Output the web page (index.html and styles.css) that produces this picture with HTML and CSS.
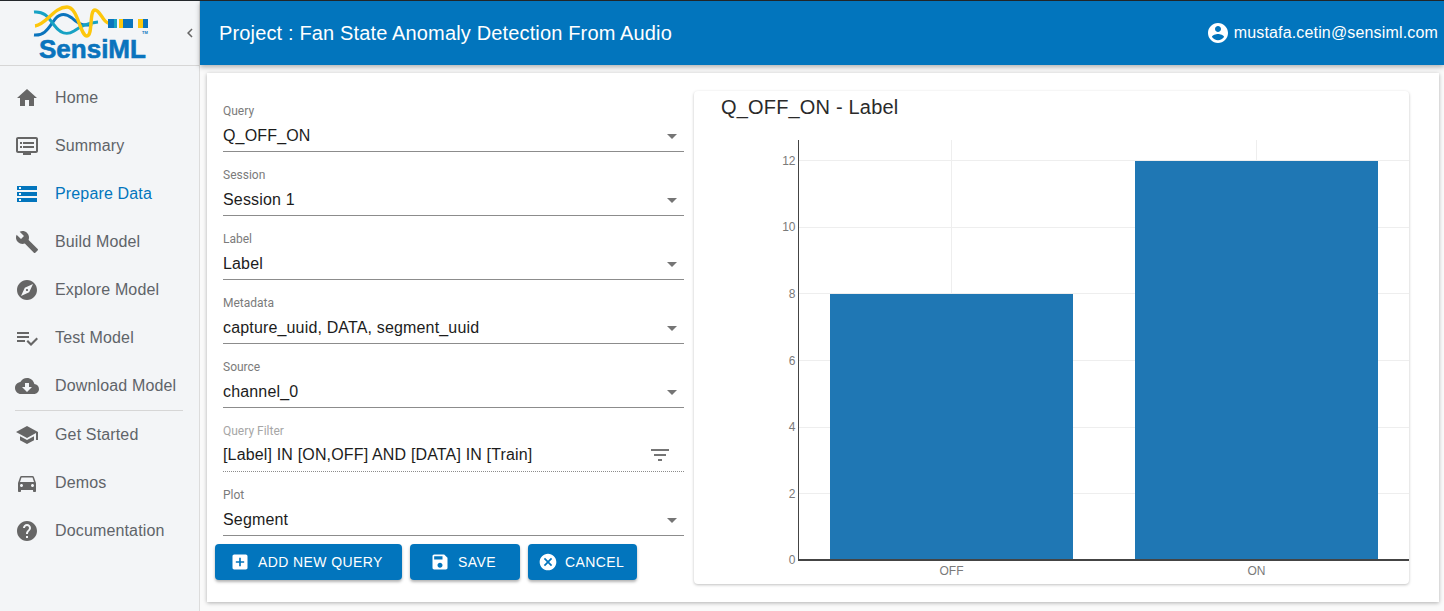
FILE: index.html
```html
<!DOCTYPE html>
<html lang="en">
<head>
  <meta charset="UTF-8">
  <title>SensiML</title>
  <link rel="stylesheet" href="styles.css">
</head>
<body>
  <div class="app">
    <aside class="sidebar">
      <div class="brand">
        <svg class="logo" width="124" height="60" viewBox="30 2 124 60">
          <path class="wave blue" d="M34 33C44 34 48 27 53 20C58 12 64 10 72 16C78 22 84 25 92 22"/>
          <path class="wave teal" d="M34 10C44 9 48 15 54 23C60 31 66 34 74 29C80 25 86 21 98 20"/>
          <path class="wave yellow" d="M35 24C46 23 54 5 67 5C78 5 80 34 87 34C93 34 89 8 95 8C100 8 103 20 108 21"/>
          <rect x="108" y="17" width="6" height="9" fill="#0a74bd"/>
          <rect x="114" y="17" width="3" height="9" fill="#17a2c4"/>
          <rect x="119" y="17" width="4" height="9" fill="#fdc70c"/>
          <rect x="123" y="17" width="10" height="9" fill="#0a74bd"/>
          <rect x="138" y="17" width="5" height="9" fill="#fdc70c"/>
          <rect x="143" y="17" width="5" height="9" fill="#0a74bd"/>
          <text class="logo-name" x="39" y="56">SensiML</text>
          <text class="logo-tm" x="142" y="31.5">TM</text>
        </svg>
        <svg class="collapse" width="18" height="18" viewBox="0 0 24 24"><path d="M15.41 7.41L14 6l-6 6 6 6 1.41-1.41L10.83 12z"/></svg>
      </div>
      <nav class="nav">
        <a class="nav-item"><svg viewBox="0 0 24 24"><path d="M10 20v-6h4v6h5v-8h3L12 3 2 12h3v8z"/></svg>Home</a>
        <a class="nav-item"><svg viewBox="0 0 24 24"><path d="M21 3H3c-1.1 0-2 .9-2 2v12c0 1.1.9 2 2 2h5v2h8v-2h5c1.1 0 1.99-.9 1.99-2L23 5c0-1.1-.9-2-2-2zm0 14H3V5h18v12zm-2-9H8v2h11V8zm0 4H8v2h11v-2zM7 8H5v2h2V8zm0 4H5v2h2v-2z"/></svg>Summary</a>
        <a class="nav-item active"><svg viewBox="0 0 24 24"><path d="M2 20h20v-4H2v4zm2-3h2v2H4v-2zM2 4v4h20V4H2zm4 3H4V5h2v2zm-4 7h20v-4H2v4zm2-3h2v2H4v-2z"/></svg>Prepare Data</a>
        <a class="nav-item"><svg viewBox="0 0 24 24"><path d="M22.7 19l-9.1-9.1c.9-2.3.4-5-1.5-6.9-2-2-5-2.4-7.4-1.3L9 6 6 9 1.6 4.7C.4 7.1.9 10.1 2.9 12.1c1.9 1.9 4.6 2.4 6.9 1.5l9.1 9.1c.4.4 1 .4 1.4 0l2.3-2.3c.5-.4.5-1.1.1-1.4z"/></svg>Build Model</a>
        <a class="nav-item"><svg viewBox="0 0 24 24"><path d="M12 10.9c-.61 0-1.1.49-1.1 1.1s.49 1.1 1.1 1.1c.61 0 1.1-.49 1.1-1.1s-.49-1.1-1.1-1.1zM12 2C6.48 2 2 6.48 2 12s4.48 10 10 10 10-4.48 10-10S17.52 2 12 2zm2.19 12.19L6 18l3.81-8.19L18 6l-3.81 8.19z"/></svg>Explore Model</a>
        <a class="nav-item"><svg viewBox="0 0 24 24"><path d="M14 10H2v2h12v-2zm0-4H2v2h12V6zM2 16h8v-2H2v2zm19.5-4.5L23 13l-6.99 7-4.51-4.5L13 14l3.01 3 5.49-5.5z"/></svg>Test Model</a>
        <a class="nav-item"><svg viewBox="0 0 24 24"><path d="M19.35 10.04C18.67 6.59 15.64 4 12 4 9.11 4 6.6 5.64 5.35 8.04 2.34 8.36 0 10.91 0 14c0 3.31 2.69 6 6 6h13c2.76 0 5-2.24 5-5 0-2.64-2.05-4.78-4.65-4.96zM17 13l-5 5-5-5h3V9h4v4h3z"/></svg>Download Model</a>
        <hr class="nav-rule">
        <a class="nav-item"><svg viewBox="0 0 24 24"><path d="M5 13.18v4L12 21l7-3.82v-4L12 17l-7-3.82zM12 3L1 9l11 6 9-4.91V17h2V9L12 3z"/></svg>Get Started</a>
        <a class="nav-item"><svg viewBox="0 0 24 24"><path d="M18.92 6.01C18.72 5.42 18.16 5 17.5 5h-11c-.66 0-1.21.42-1.42 1.01L3 12v8c0 .55.45 1 1 1h1c.55 0 1-.45 1-1v-1h12v1c0 .55.45 1 1 1h1c.55 0 1-.45 1-1v-8l-2.08-5.99zM6.5 16c-.83 0-1.5-.67-1.5-1.5S5.67 13 6.5 13s1.5.67 1.5 1.5S7.33 16 6.5 16zm11 0c-.83 0-1.5-.67-1.5-1.5s.67-1.5 1.5-1.5 1.5.67 1.5 1.5-.67 1.5-1.5 1.5zM5 11l1.5-4.5h11L19 11H5z"/></svg>Demos</a>
        <a class="nav-item"><svg viewBox="0 0 24 24"><path d="M12 2C6.48 2 2 6.48 2 12s4.48 10 10 10 10-4.48 10-10S17.52 2 12 2zm1 17h-2v-2h2v2zm2.07-7.75l-.9.92C13.45 12.9 13 13.5 13 15h-2v-.5c0-1.1.45-2.1 1.17-2.83l1.24-1.26c.37-.36.59-.86.59-1.41 0-1.1-.9-2-2-2s-2 .9-2 2H8c0-2.21 1.79-4 4-4s4 1.79 4 4c0 .88-.36 1.68-.93 2.25z"/></svg>Documentation</a>
      </nav>
    </aside>

    <div class="content">
      <header class="topbar">
        <div class="project">Project : Fan State Anomaly Detection From Audio</div>
        <div class="user">
          <svg viewBox="0 0 24 24"><path d="M12 2C6.48 2 2 6.48 2 12s4.48 10 10 10 10-4.48 10-10S17.52 2 12 2zm0 3c1.66 0 3 1.34 3 3s-1.34 3-3 3-3-1.34-3-3 1.34-3 3-3zm0 14.2c-2.5 0-4.71-1.28-6-3.22.03-1.99 4-3.08 6-3.08 1.99 0 5.97 1.09 6 3.08-1.29 1.94-3.5 3.22-6 3.22z"/></svg>
          mustafa.cetin@sensiml.com
        </div>
      </header>

      <main class="page">
        <section class="panel">
          <form class="query-form">
            <div class="fields">
              <div class="field">
                <label>Query</label>
                <div class="value">Q_OFF_ON<svg class="caret" viewBox="0 0 24 24"><path d="M7 10l5 5 5-5z"/></svg></div>
              </div>
              <div class="field">
                <label>Session</label>
                <div class="value">Session 1<svg class="caret" viewBox="0 0 24 24"><path d="M7 10l5 5 5-5z"/></svg></div>
              </div>
              <div class="field">
                <label>Label</label>
                <div class="value">Label<svg class="caret" viewBox="0 0 24 24"><path d="M7 10l5 5 5-5z"/></svg></div>
              </div>
              <div class="field">
                <label>Metadata</label>
                <div class="value">capture_uuid, DATA, segment_uuid<svg class="caret" viewBox="0 0 24 24"><path d="M7 10l5 5 5-5z"/></svg></div>
              </div>
              <div class="field">
                <label>Source</label>
                <div class="value">channel_0<svg class="caret" viewBox="0 0 24 24"><path d="M7 10l5 5 5-5z"/></svg></div>
              </div>
              <div class="field filter">
                <label>Query Filter</label>
                <div class="value">[Label] IN [ON,OFF] AND [DATA] IN [Train]<svg class="filter-icon" viewBox="0 0 24 24"><path d="M10 18h4v-2h-4v2zM3 6v2h18V6H3zm3 7h12v-2H6v2z"/></svg></div>
              </div>
              <div class="field">
                <label>Plot</label>
                <div class="value">Segment<svg class="caret" viewBox="0 0 24 24"><path d="M7 10l5 5 5-5z"/></svg></div>
              </div>
            </div>
            <div class="actions">
              <button type="button" class="btn btn-add"><svg viewBox="0 0 24 24"><path d="M19 3H5c-1.11 0-2 .9-2 2v14c0 1.1.89 2 2 2h14c1.1 0 2-.9 2-2V5c0-1.1-.9-2-2-2zm-2 10h-4v4h-2v-4H7v-2h4V7h2v4h4v2z"/></svg>Add New Query</button>
              <button type="button" class="btn btn-save"><svg viewBox="0 0 24 24"><path d="M17 3H5c-1.11 0-2 .9-2 2v14c0 1.1.89 2 2 2h14c1.1 0 2-.9 2-2V7l-4-4zm-5 16c-1.66 0-3-1.34-3-3s1.34-3 3-3 3 1.34 3 3-1.34 3-3 3zm3-10H5V5h10v4z"/></svg>Save</button>
              <button type="button" class="btn btn-cancel"><svg viewBox="0 0 24 24"><path d="M12 2C6.47 2 2 6.47 2 12s4.47 10 10 10 10-4.47 10-10S17.53 2 12 2zm5 13.59L15.59 17 12 13.41 8.41 17 7 15.59 10.59 12 7 8.41 8.41 7 12 10.59 15.59 7 17 8.41 13.41 12 17 15.59z"/></svg>Cancel</button>
            </div>
          </form>

          <div class="chart-card">
            <h2 class="chart-title">Q_OFF_ON - Label</h2>
            <svg class="chart" width="715" height="453" viewBox="0 0 715 453">
              <g class="grid">
                <path d="M257.5 9V429M562.5 9V429"/>
                <path d="M105 29.5H715M105 96.5H715M105 162.5H715M105 229.5H715M105 296.5H715M105 362.5H715"/>
              </g>
              <rect class="bar" x="136" y="163" width="243" height="266"/>
              <rect class="bar" x="441" y="30" width="243" height="399"/>
              <path class="axis" d="M104.5 9V430"/>
              <path class="axis base" d="M104 429H715"/>
              <g class="ticks">
                <text x="101.5" y="34">12</text>
                <text x="101.5" y="100">10</text>
                <text x="101.5" y="167">8</text>
                <text x="101.5" y="234">6</text>
                <text x="101.5" y="300">4</text>
                <text x="101.5" y="367">2</text>
                <text x="101.5" y="433">0</text>
              </g>
              <g class="labels">
                <text x="257.5" y="444">OFF</text>
                <text x="562.5" y="444">ON</text>
              </g>
            </svg>
          </div>
        </section>
      </main>
    </div>
  </div>
</body>
</html>
```

FILE: styles.css
```css
* {
  box-sizing: border-box;
}

html, body {
  height: 100%;
}

body {
  margin: 0;
  overflow: hidden;
  background: #fff;
  font-family: "Liberation Sans", Arial, sans-serif;
  color: #1c1c1c;
}

.app {
  display: flex;
  height: 611px;
  border-top: 1px solid #23272b;
}

/* sidebar */
.sidebar {
  width: 200px;
  flex: none;
  background: #f3f5f7;
  border-right: 1px solid #dcdcdc;
}

.brand {
  display: flex;
  align-items: center;
  height: 65px;
  padding-left: 30px;
  border-bottom: 1px solid #d6d6d6;
  position: relative;
}

.logo {
  display: block;
  margin-top: 1px;
}

.wave {
  fill: none;
  stroke-width: 3;
}

.wave.blue { stroke: #0a74bd; }
.wave.teal { stroke: #17a2c4; }
.wave.yellow { stroke: #fdc70c; stroke-width: 3.4; }

.logo-name {
  font-weight: 700;
  font-size: 26px;
  fill: #0a74bd;
  stroke: #0a74bd;
  stroke-width: 0.6px;
}

.logo-tm {
  font-weight: 700;
  font-size: 4px;
  fill: #0a74bd;
}

.collapse {
  position: absolute;
  right: 0;
  top: 23px;
  fill: #666;
}

.nav {
  display: flex;
  flex-direction: column;
  padding-top: 8px;
}

.nav-item {
  display: flex;
  align-items: center;
  height: 48px;
  padding-left: 15px;
  font-size: 16px;
  letter-spacing: 0.15px;
  color: #5f6469;
}

.nav-item svg {
  width: 24px;
  height: 24px;
  margin-right: 16px;
  fill: #666;
}

.nav-item.active {
  color: #0275bd;
}

.nav-item.active svg {
  fill: #0275bd;
}

.nav-rule {
  width: 168px;
  margin: 0 0 0 15px;
  border: 0;
  border-top: 1px solid #d6d6d6;
}

/* header */
.content {
  flex: 1;
  min-width: 0;
  display: flex;
  flex-direction: column;
}

.topbar {
  display: flex;
  align-items: center;
  justify-content: space-between;
  height: 64px;
  flex: none;
  padding: 0 6px 0 19px;
  background: #0275bd;
  color: #fff;
  box-shadow: 0 2px 5px rgba(0, 0, 0, 0.3);
  position: relative;
}

.project {
  font-size: 20px;
  letter-spacing: 0.15px;
}

.user {
  display: flex;
  align-items: center;
  gap: 4px;
  font-size: 16px;
  letter-spacing: 0.16px;
}

.user svg {
  width: 24px;
  height: 24px;
  fill: #fff;
}

/* main card */
.page {
  flex: 1;
  padding: 8px 5px 9px 7px;
  background: #fafafa;
}

.panel {
  display: flex;
  height: 529px;
  padding: 18px 30px 18px 8px;
  background: #fff;
  box-shadow: 0 1px 4px rgba(0, 0, 0, 0.3);
}

.query-form {
  width: 469px;
  flex: none;
}

.fields {
  padding-left: 8px;
}

.field {
  height: 64px;
  padding-top: 13px;
}

.field label {
  display: block;
  height: 14px;
  font-family: Roboto, sans-serif;
  font-size: 12px;
  line-height: 14px;
  color: #7b7b7b;
}

.field.filter label {
  color: #a6a6a6;
}

.value {
  display: flex;
  align-items: center;
  justify-content: space-between;
  height: 34px;
  padding-top: 3px;
  font-size: 16px;
  letter-spacing: 0.16px;
  border-bottom: 1px solid #8c8c8c;
}

.field.filter .value {
  padding-top: 1px;
  border-bottom: 1px dotted #8c8c8c;
}

.caret {
  width: 24px;
  height: 24px;
  fill: #757575;
}

.filter-icon {
  width: 24px;
  height: 24px;
  margin-right: 12px;
  fill: #757575;
}

.actions {
  display: flex;
  gap: 8px;
  margin-top: 5px;
}

.btn {
  display: flex;
  align-items: center;
  height: 36px;
  border: 0;
  border-radius: 4px;
  background: #0275bd;
  color: #fff;
  font-family: "Liberation Sans", Arial, sans-serif;
  font-size: 14px;
  letter-spacing: 0.4px;
  text-transform: uppercase;
  box-shadow: 0 2px 3px rgba(0, 0, 0, 0.3);
}

.btn svg {
  width: 20px;
  height: 20px;
  margin-right: 8px;
  fill: #fff;
}

.btn-add { width: 187px; padding: 0 0 0 15px; }
.btn-save { width: 110px; padding: 0 0 0 20px; }
.btn-cancel { width: 109px; padding: 0 0 0 10px; }
.btn-cancel svg { margin-right: 7px; }

/* chart */
.chart-card {
  width: 715px;
  flex: none;
  margin-left: 10px;
  border-radius: 4px;
  box-shadow: 0 1px 3px rgba(0, 0, 0, 0.25);
}

.chart-title {
  height: 40px;
  margin: 0;
  padding-left: 27px;
  font-size: 20px;
  font-weight: 400;
  letter-spacing: 0.18px;
  line-height: 32px;
  color: #2a2a2a;
}

.chart {
  display: block;
}

.grid path {
  fill: none;
  stroke: #eeeeee;
}

.bar {
  fill: #1f77b4;
}

.axis {
  fill: none;
  stroke: #444;
}

.axis.base {
  stroke-width: 2;
}

.ticks text,
.labels text {
  font-size: 12px;
  fill: #7a7a7a;
}

.ticks text {
  text-anchor: end;
}

.labels text {
  text-anchor: middle;
}
```
